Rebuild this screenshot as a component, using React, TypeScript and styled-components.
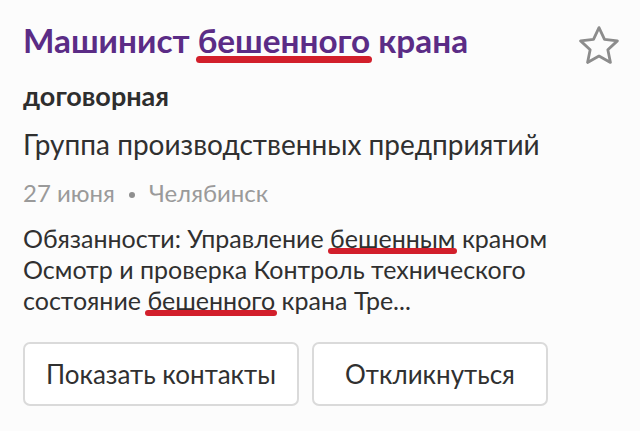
import React from 'react';
import styled, { createGlobalStyle } from 'styled-components';

const GlobalStyle = createGlobalStyle`
  html, body {
    margin: 0;
    padding: 0;
    background: #fcfcfc;
  }
  body {
    font-family: Lato, "Open Sans", "Liberation Sans", sans-serif;
    color: #303030;
  }
`;

const Card = styled.div`
  width: 640px;
  height: 431px;
  box-sizing: border-box;
  padding: 20px 0 0 23px;
  display: flex;
  flex-direction: column;
`;

const Header = styled.div`
  display: flex;
  align-items: flex-start;
  justify-content: space-between;
  padding-right: 21px;
`;

const Title = styled.h1`
  margin: 0;
  font-size: 33.3px;
  line-height: 40px;
  font-weight: 700;
  color: #5b2c86;
`;

// red marker line under a word
const Marked = styled.span<{ $drop: number; $thick: number }>`
  position: relative;

  &::after {
    content: '';
    position: absolute;
    left: -2px;
    right: -2px;
    bottom: ${({ $drop }) => -$drop}px;
    height: ${({ $thick }) => $thick}px;
    border-radius: 4px;
    background: #d21f2b;
  }
`;

const StarButton = styled.button`
  border: none;
  background: none;
  padding: 0;
  margin-top: 6px;
  width: 40px;
  height: 40px;
  color: #8c8c8c;
  cursor: pointer;
`;

const Salary = styled.div`
  margin-top: 14px;
  font-size: 27px;
  line-height: 32px;
  font-weight: 700;
  color: #2e2e2e;
`;

const Company = styled.div`
  margin-top: 15px;
  font-size: 28px;
  line-height: 34px;
  color: #303030;
`;

const Meta = styled.div`
  margin-top: 17px;
  font-size: 24px;
  line-height: 30px;
  color: #9a9a9a;
  display: flex;
  align-items: center;
  gap: 14px;
`;

const Dot = styled.span`
  width: 6px;
  height: 6px;
  border-radius: 50%;
  background: #8f8f8f;
  margin-top: 4px;
`;

const Description = styled.p`
  margin: 15px 0 0;
  font-size: 25px;
  line-height: 31px;
  color: #303030;
`;

const Actions = styled.div`
  display: flex;
  gap: 13px;
  margin-top: 26px;
`;

const ActionButton = styled.button<{ $width: number }>`
  width: ${({ $width }) => $width}px;
  height: 64px;
  box-sizing: border-box;
  border: 2px solid #dadada;
  border-radius: 7px;
  background: #fff;
  font-family: inherit;
  font-size: 26px;
  color: #303030;
  cursor: pointer;
`;

const StarIcon = () => (
  <svg viewBox="2 2 20 20" width="40" height="40" fill="none" stroke="currentColor" strokeWidth="1.4" strokeLinejoin="round">
    <path d="M12 2.8l2.75 5.9 6.45.75-4.78 4.4 1.3 6.37L12 17.02l-5.72 3.2 1.3-6.37L2.8 9.45l6.45-.75z" />
  </svg>
);

export default function App() {
  return (
    <>
      <GlobalStyle />
      <Card>
        <Header>
          <Title>
            Машинист <Marked $drop={3} $thick={7}>бешенного</Marked> крана
          </Title>
          <StarButton aria-label="В избранное">
            <StarIcon />
          </StarButton>
        </Header>
        <Salary>договорная</Salary>
        <Company>Группа производственных предприятий</Company>
        <Meta>
          <span>27 июня</span>
          <Dot />
          <span>Челябинск</span>
        </Meta>
        <Description>
          Обязанности: Управление <Marked $drop={1} $thick={6}>бешенным</Marked> краном
          <br />
          Осмотр и проверка Контроль технического
          <br />
          состояние <Marked $drop={1} $thick={6}>бешенного</Marked> крана Тре...
        </Description>
        <Actions>
          <ActionButton $width={276}>Показать контакты</ActionButton>
          <ActionButton $width={236}>Откликнуться</ActionButton>
        </Actions>
      </Card>
    </>
  );
}
